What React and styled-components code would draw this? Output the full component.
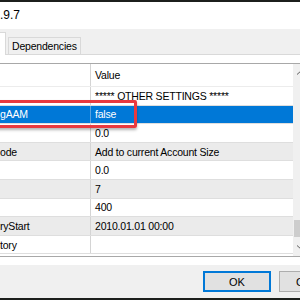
import React from 'react';
import styled, { createGlobalStyle } from 'styled-components';

const GlobalStyle = createGlobalStyle`
  html, body {
    margin: 0;
    padding: 0;
    width: 300px;
    height: 300px;
    overflow: hidden;
    background: #f0f0f0;
  }
  body {
    font-family: "Liberation Sans", Arial, sans-serif;
  }
`;

const Dialog = styled.div`
  width: 300px;
  height: 300px;
  overflow: hidden;
  display: flex;
  flex-direction: column;
  background: #f0f0f0;
  color: #000;
  font-size: 10.5px;
  letter-spacing: -0.2px;
`;

const Edge = styled.div`
  flex: none;
  height: 2px;
  background: #1c1f1c;
`;

const TitleBar = styled.div`
  flex: none;
  height: 27px;
  padding-bottom: 2px;
  box-sizing: border-box;
  display: flex;
  align-items: center;
  background: #fff;
  font-size: 12px;
  letter-spacing: 0;
`;

const TabStrip = styled.div`
  flex: none;
  height: 26px;
  box-sizing: border-box;
  display: flex;
  align-items: flex-end;
  gap: 2px;
  border-bottom: 1px solid #d9d9d9;
`;

const Tab = styled.div`
  position: relative;
  box-sizing: border-box;
  display: flex;
  align-items: center;
  height: ${p => (p.$active ? '23px' : '17px')};
  margin-bottom: ${p => (p.$active ? '-1px' : '0')};
  padding: 0 ${p => (p.$active ? '0' : '3px')};
  width: ${p => (p.$active ? '6px' : 'auto')};
  background: ${p => (p.$active ? '#fff' : '#f0f0f0')};
  border: 1px solid #d9d9d9;
  border-left: ${p => (p.$active ? 'none' : '1px solid #d9d9d9')};
  border-bottom: none;
`;

const Panel = styled.div`
  flex: none;
  height: 210px;
  box-sizing: border-box;
  padding: 8px 0;
  background: #fff;
  display: flex;
  flex-direction: column;
`;

const List = styled.div`
  flex: 1;
  display: flex;
  border-top: 1px solid #a8a8a8;
  border-bottom: 1px solid #a8a8a8;
`;

const Table = styled.div`
  position: relative;
  flex: 0 0 293px;
  display: flex;
  flex-direction: column;
  background: #fff;
`;

const Row = styled.div`
  flex: none;
  display: grid;
  grid-template-columns: 91px 1fr;
  box-sizing: border-box;
  height: ${p => (p.$header ? '23px' : '18.6px')};
  border-bottom: 1px solid ${p => (p.$header ? '#ececec' : '#dedede')};
  background: ${p => (p.$selected ? '#0078d7' : p.$shade ? '#ebebeb' : '#fff')};
  color: ${p => (p.$selected ? '#fff' : '#000')};
`;

const Cell = styled.div`
  display: flex;
  align-items: center;
  overflow: hidden;
  white-space: nowrap;
  padding-left: ${p => (p.$name ? '0' : '4px')};
  border-right: ${p => (p.$name ? '1px solid' : 'none')};
  border-color: ${p => (p.$selected ? '#5aa3e0' : '#d4d4d4')};
`;

const Highlight = styled.div`
  position: absolute;
  left: -4px;
  top: 36px;
  width: 141px;
  height: 28px;
  box-sizing: border-box;
  border: 3px solid #e8393f;
  border-radius: 2px;
  box-shadow: 0 2px 3px rgba(0, 0, 0, 0.3);
`;

const Scrollbar = styled.div`
  flex: 0 0 17px;
  display: flex;
  flex-direction: column;
  background: #f0f0f0;
`;

const ScrollButton = styled.div`
  flex: none;
  height: 17px;
  display: flex;
  align-items: center;
  justify-content: center;
`;

const Track = styled.div`
  flex: 1;
  display: flex;
  flex-direction: column;
  justify-content: flex-end;
  padding: 0 1px 2px;
`;

const Thumb = styled.div`
  height: 17px;
  background: #cdcdcd;
`;

const Footer = styled.div`
  flex: 1;
  display: flex;
  align-items: flex-start;
  gap: 8px;
  padding: 6px 0 0 203px;
`;

const Button = styled.div`
  flex: none;
  width: 68px;
  height: 21px;
  box-sizing: border-box;
  display: flex;
  align-items: center;
  justify-content: center;
  background: #e1e1e1;
  border: 1px solid ${p => (p.$default ? '#0078d7' : '#adadad')};
  box-shadow: ${p => (p.$default ? 'inset 0 0 0 1px #0078d7' : 'none')};
  font-size: 11px;
  letter-spacing: 0;
`;

const rows = [
  { name: '', value: '***** OTHER SETTINGS *****' },
  { name: 'gAAM', value: 'false', selected: true },
  { name: '', value: '0.0' },
  { name: 'ode', value: 'Add to current Account Size' },
  { name: '', value: '0.0' },
  { name: '', value: '7' },
  { name: '', value: '400' },
  { name: 'ryStart', value: '2010.01.01 00:00' },
  { name: 'tory', value: '' },
];

const Chevron = ({ down }) => (
  <svg width="17" height="17" viewBox="0 0 17 17">
    <path
      d={down ? 'M4 6.5 L8.5 10.5 L13 6.5' : 'M4 10.5 L8.5 6.5 L13 10.5'}
      fill="none"
      stroke="#606060"
      strokeWidth="1"
    />
  </svg>
);

export default function App() {
  return (
    <Dialog>
      <GlobalStyle />
      <Edge />
      <TitleBar>.9.7</TitleBar>
      <TabStrip>
        <Tab $active />
        <Tab>Dependencies</Tab>
      </TabStrip>
      <Panel>
        <List>
          <Table>
            <Row $header>
              <Cell $name />
              <Cell>Value</Cell>
            </Row>
            {rows.map((r, i) => (
              <Row key={i} $selected={r.selected} $shade={i % 2 === 1}>
                <Cell $name $selected={r.selected}>
                  {r.name}
                </Cell>
                <Cell>{r.value}</Cell>
              </Row>
            ))}
            <Highlight />
          </Table>
          <Scrollbar>
            <ScrollButton>
              <Chevron />
            </ScrollButton>
            <Track>
              <Thumb />
            </Track>
            <ScrollButton>
              <Chevron down />
            </ScrollButton>
          </Scrollbar>
        </List>
      </Panel>
      <Footer>
        <Button $default>OK</Button>
        <Button>Cancel</Button>
      </Footer>
      <Edge />
    </Dialog>
  );
}
